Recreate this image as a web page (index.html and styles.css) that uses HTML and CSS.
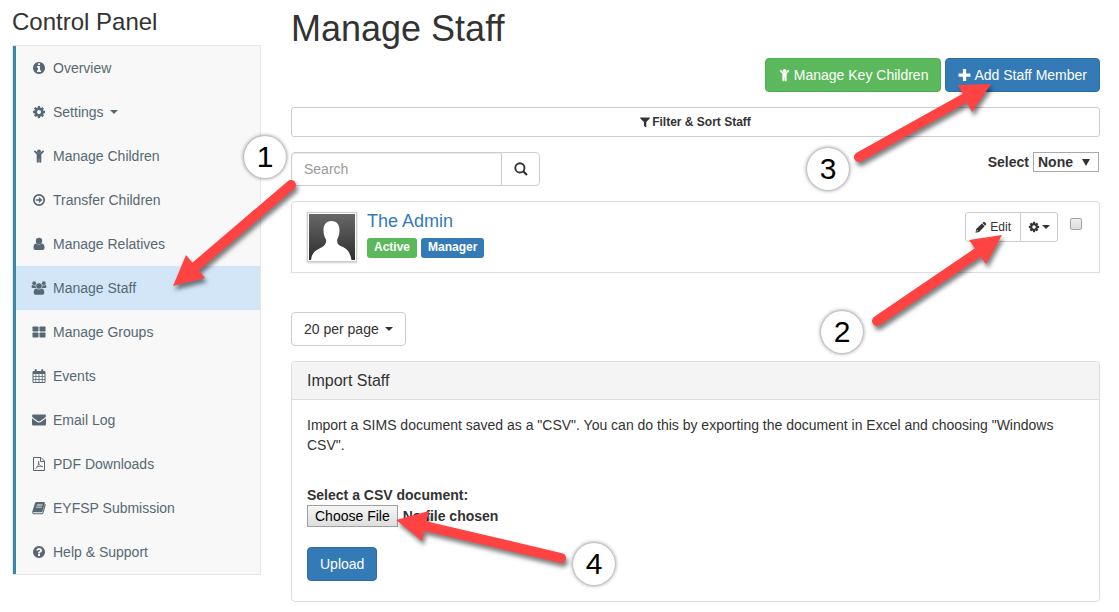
FILE: index.html
```html
<!DOCTYPE html>
<html lang="en">
<head>
    <meta charset="UTF-8">
    <meta name="viewport" content="width=device-width, initial-scale=1.0">
    <title>Manage Staff</title>
    <link rel="stylesheet" href="styles.css">
</head>
<body>

    <!-- icon sprite -->
    <svg class="sprite" aria-hidden="true">
        <symbol id="i-info" viewBox="0 0 1792 1792"><path d="M1152 1376v-160q0-14-9-23t-23-9h-96v-512q0-14-9-23t-23-9h-320q-14 0-23 9t-9 23v160q0 14 9 23t23 9h96v320h-96q-14 0-23 9t-9 23v160q0 14 9 23t23 9h448q14 0 23-9t9-23zm-128-896v-160q0-14-9-23t-23-9h-192q-14 0-23 9t-9 23v160q0 14 9 23t23 9h192q14 0 23-9t9-23zm640 416q0 209-103 385.5t-279.5 279.5-385.5 103-385.5-103-279.5-279.5-103-385.5 103-385.5 279.5-279.5 385.5-103 385.5 103 279.5 279.5 103 385.5z"/></symbol>
        <symbol id="i-cog" viewBox="0 0 1792 1792"><path d="M1152 896q0-106-75-181t-181-75-181 75-75 181 75 181 181 75 181-75 75-181zm512-109v222q0 12-8 23t-20 13l-185 28q-19 54-39 91 35 50 107 138 10 12 10 25t-9 23q-27 37-99 108t-94 71q-12 0-26-9l-138-108q-44 23-91 38-16 136-29 186-7 28-36 28h-222q-14 0-24.5-8.5t-11.5-21.5l-28-184q-49-16-90-37l-141 107q-10 9-25 9-14 0-25-11-126-114-165-168-7-10-7-23 0-12 8-23 15-21 51-66.5t54-70.5q-27-50-41-99l-183-27q-13-2-21-12.5t-8-23.5v-222q0-12 8-23t19-13l186-28q14-46 39-92-40-57-107-138-10-12-10-24 0-10 9-23 26-36 98.5-107.5t94.5-71.5q13 0 26 10l138 107q44-23 91-38 16-136 29-186 7-28 36-28h222q14 0 24.5 8.5t11.5 21.5l28 184q49 16 90 37l142-107q9-9 24-9 13 0 25 10 129 119 165 170 7 8 7 22 0 12-8 23-15 21-51 66.5t-54 70.5q26 50 41 98l183 28q13 2 21 12.5t8 23.5z"/></symbol>
        <symbol id="i-child" viewBox="0 0 14 14"><circle cx="7" cy="2.5" r="2"/><path d="M2.300 1.800a.9.9 0 0 1 1.300 0L6 4.200h2l2.400-2.400a.9.9 0 0 1 1.300 1.300L9.300 5.600V12.800a1 1 0 0 1-2.100 0V9.700h-.4v3.100a1 1 0 0 1-2.100 0V5.600L2.300 3.100a.9.9 0 0 1 0-1.300z"/></symbol>
        <symbol id="i-arrow" viewBox="0 0 14 14"><circle cx="7" cy="7" r="5.200" fill="none" stroke="currentColor" stroke-width="1.700"/><path d="M3.700 6.200h3.200V4L10.400 7 6.900 10V7.800H3.700z"/></symbol>
        <symbol id="i-user" viewBox="0 0 14 14"><circle cx="7" cy="4" r="3.200"/><path d="M1.500 10.800c0-2.600.7-4.400 2.700-4.400q2.800 2.200 5.600 0c2 0 2.700 1.800 2.700 4.400 0 1.400-.7 2.200-1.900 2.200H3.400c-1.200 0-1.900-.8-1.900-2.200z"/></symbol>
        <symbol id="i-users" viewBox="0 0 16 14"><circle cx="3.200" cy="2.200" r="1.900"/><circle cx="12.800" cy="2.200" r="1.900"/><path d="M.5 5.500Q.6 4 1.600 4q1.600 1 3 .3Q4.400 6 5.200 7H2Q.5 7 .5 5.500zM15.500 5.500Q15.400 4 14.400 4q-1.600 1-3 .3.200 1.700-.6 2.700H14q1.500 0 1.500-1.500z"/><circle cx="8" cy="5" r="2.800"/><path d="M2.700 11.800c0-2.500.8-4.400 2.500-4.400q2.800 2 5.600 0c1.700 0 2.500 1.900 2.500 4.400 0 1.200-.7 2-1.900 2H4.600c-1.200 0-1.900-.8-1.900-2z"/></symbol>
        <symbol id="i-groups" viewBox="0 0 14 14"><rect x=".5" y="1.500" width="6" height="5" rx=".7"/><rect x="7.500" y="1.500" width="6" height="5" rx=".7"/><rect x=".5" y="7.500" width="6" height="5" rx=".7"/><rect x="7.500" y="7.500" width="6" height="5" rx=".7"/></symbol>
        <symbol id="i-calendar" viewBox="0 0 14 14"><path fill-rule="evenodd" d="M1.500 2h1.200V1q0-1 1-1t1 1v1h4.600V1q0-1 1-1t1 1v1h1.200q1 0 1 1v10q0 1-1 1h-11q-1 0-1-1V3q0-1 1-1zM1.500 5v2h2V5zm2.700 0v2h2.400V5zm3.200 0v2h2.400V5zm3.200 0v2h1.900V5zM1.500 7.800v2.200h2V7.800zm2.700 0v2.200h2.400V7.800zm3.200 0v2.200h2.400V7.800zm3.200 0v2.200h1.900V7.800zM1.500 10.800V13h2v-2.200zm2.700 0V13h2.400v-2.200zm3.200 0V13h2.400v-2.200zm3.200 0V13h1.900v-2.200z"/></symbol>
        <symbol id="i-envelope" viewBox="0 0 14 14"><path d="M0 2.800q0-1.300 1.300-1.300h11.400q1.300 0 1.300 1.300 0 1.100-1.100 1.900L8.300 8q-1.300.9-2.600 0L1.100 4.700Q0 3.900 0 2.800zM0 5.200l5.100 3.700q1.900 1.300 3.800 0L14 5.200v6q0 1.300-1.300 1.300H1.300Q0 12.500 0 11.200z"/></symbol>
        <symbol id="i-pdf" viewBox="0 0 14 14"><path fill="none" stroke="currentColor" d="M1.500.5h7.500l3.500 3.500v9.500h-11zM8.500.5v4h4"/><path fill="none" stroke="currentColor" stroke-width=".8" d="M3.300 11.800q1.500-.6 2.700-3.300 1.100-2.600.6-4.200-.5 1.700.7 3.500 1.300 1.900 3.500 1.800-2.200-.8-6.100.3"/></symbol>
        <symbol id="i-book" viewBox="0 0 14 14"><path fill-rule="evenodd" d="M4.700 1h7.200q1.200 0 .9 1.200l-2.300 8q-.3 1-1.300 1H1.700q-.6 0-.5.500.2.500.9.500h7.400q.8 0 1-.8L12.900 2.800q1.100.3.800 1.200l-2.300 8.100q-.4 1.100-1.500 1.100H2.100Q.6 13.200.3 11.700q-.2-.7.1-1.400L2.900 2.200q.4-1.200 1.800-1.200zM5 3.600l-.3.900h5.600l.3-.9zm-.7 2.100-.3.900h5.600l.3-.9z"/></symbol>
        <symbol id="i-help" viewBox="0 0 1792 1792"><path d="M1024 1376v-192q0-14-9-23t-23-9h-192q-14 0-23 9t-9 23v192q0 14 9 23t23 9h192q14 0 23-9t9-23zm256-672q0-88-55.5-163t-138.5-116-170-41q-243 0-371 213-15 24 8 42l132 100q7 6 19 6 16 0 25-12 53-68 86-92 34-24 86-24 48 0 85.500 26t37.500 59q0 38-20 61t-68 45q-63 28-115.500 86.500t-52.500 125.500v36q0 14 9 23t23 9h192q14 0 23-9t9-23q0-19 21.500-49.500t54.500-49.500q32-18 49-28.500t46-35 44.500-48 28-60.500 12.500-81zm384 192q0 209-103 385.500t-279.500 279.500-385.500 103-385.500-103-279.500-279.500-103-385.500 103-385.500 279.500-279.500 385.500-103 385.500 103 279.500 279.500 103 385.500z"/></symbol>
        <symbol id="i-plus" viewBox="0 0 12 12"><path d="M4.500.5h3v4h4v3h-4v4h-3v-4h-4v-3h4z"/></symbol>
        <symbol id="i-filter" viewBox="0 0 10 12"><path d="M.5 1.500h9q.6.4.2 1L6.300 6v5q-.3.500-.8.200L3.900 9.700V6L.3 2.500q-.4-.6.200-1z"/></symbol>
        <symbol id="i-search" viewBox="0 0 14 14"><circle cx="5.900" cy="5.900" r="4.600" fill="none" stroke="currentColor" stroke-width="1.900"/><path d="M9.200 9.200l3.800 3.800" fill="none" stroke="currentColor" stroke-width="2.200"/></symbol>
        <symbol id="i-pencil" viewBox="0 0 12 12"><path fill-rule="evenodd" d="M8.300 1.200q.7-.7 1.500 0l1.200 1.200q.6.700 0 1.400l-.9.900-2.700-2.700zM6.900 2.500l2.700 2.700-5.500 5.700-3.600.8.700-3.700zM1.900 8.900l-.3 1.500 1.600-.3z"/></symbol>
    </svg>

    <div class="page">
        <aside class="sidebar">
            <h3>Control Panel</h3>
            <nav class="side-nav">
                <a href="#"><svg class="icon"><use href="#i-info"/></svg>Overview</a>
                <a href="#"><svg class="icon"><use href="#i-cog"/></svg>Settings <span class="caret"></span></a>
                <a href="#"><svg class="icon"><use href="#i-child"/></svg>Manage Children</a>
                <a href="#"><svg class="icon"><use href="#i-arrow"/></svg>Transfer Children</a>
                <a href="#"><svg class="icon"><use href="#i-user"/></svg>Manage Relatives</a>
                <a href="#" class="active"><svg class="icon icon-wide"><use href="#i-users"/></svg>Manage Staff</a>
                <a href="#"><svg class="icon"><use href="#i-groups"/></svg>Manage Groups</a>
                <a href="#"><svg class="icon"><use href="#i-calendar"/></svg>Events</a>
                <a href="#"><svg class="icon"><use href="#i-envelope"/></svg>Email Log</a>
                <a href="#"><svg class="icon"><use href="#i-pdf"/></svg>PDF Downloads</a>
                <a href="#"><svg class="icon"><use href="#i-book"/></svg>EYFSP Submission</a>
                <a href="#"><svg class="icon"><use href="#i-help"/></svg>Help &amp; Support</a>
            </nav>
        </aside>

        <main class="content">
            <h1>Manage Staff</h1>

            <div class="actions">
                <button type="button" class="btn btn-success"><svg class="icon-btn"><use href="#i-child"/></svg>Manage Key Children</button>
                <button type="button" class="btn btn-primary"><svg class="icon-btn"><use href="#i-plus"/></svg>Add Staff Member</button>
            </div>

            <button type="button" class="btn btn-filter"><svg class="icon-filter"><use href="#i-filter"/></svg>Filter &amp; Sort Staff</button>

            <div class="toolbar">
                <form class="search">
                    <input type="text" placeholder="Search" aria-label="Search">
                    <button type="button" class="btn" aria-label="Search"><svg class="icon-search"><use href="#i-search"/></svg></button>
                </form>
                <div class="select-all">
                    <label for="select-all">Select</label>
                    <span class="select-wrap">
                        <select id="select-all">
                            <option>None</option>
                            <option>All</option>
                        </select>
                    </span>
                </div>
            </div>

            <div class="staff">
                <svg class="avatar" viewBox="0 0 46 46" role="img" aria-label="The Admin">
                    <defs>
                        <linearGradient id="avatar-bg" x1="0" y1="0" x2="0" y2="1">
                            <stop offset="0" stop-color="#686868"/>
                            <stop offset="1" stop-color="#2e2e2e"/>
                        </linearGradient>
                    </defs>
                    <rect width="46" height="46" fill="url(#avatar-bg)"/>
                    <path fill="#fff" d="M22.500 7c5.500 0 8 4 8 9 0 4.500-1 7-2.300 9.500-.2 3 .3 5 3.300 6.500 7 2.500 9.500 6 11 14H2c1-7 3.500-9 8.500-11.500 4.500-2.500 7-4 6.500-9C15.500 23 14.500 20.500 14.500 16c0-5 2.500-9 8-9z"/>
                </svg>
                <div class="staff-info">
                    <a href="#" class="staff-name">The Admin</a>
                    <div class="labels">
                        <span class="label label-success">Active</span>
                        <span class="label label-primary">Manager</span>
                    </div>
                </div>
                <div class="staff-tools">
                    <div class="btn-group">
                        <button type="button" class="btn btn-sm"><svg class="icon-sm"><use href="#i-pencil"/></svg>Edit</button>
                        <button type="button" class="btn btn-sm btn-cog" aria-label="Options"><svg class="icon-cog"><use href="#i-cog"/></svg><span class="caret"></span></button>
                    </div>
                    <input type="checkbox" aria-label="Select The Admin">
                </div>
            </div>

            <button type="button" class="btn btn-paging">20 per page <span class="caret"></span></button>

            <section class="panel">
                <h2>Import Staff</h2>
                <form class="panel-body">
                    <p>Import a SIMS document saved as a "CSV". You can do this by exporting the document in Excel and choosing "Windows CSV".</p>
                    <label for="csv-file">Select a CSV document:</label>
                    <input type="file" id="csv-file">
                    <button type="button" class="btn btn-primary">Upload</button>
                </form>
            </section>
        </main>

        <!-- numbered steps over the page -->
        <svg class="arrows" aria-hidden="true">
            <g>
                <path class="shaft" d="M291 185L195 267"/>
                <path d="M173 286L186 255L205 278z"/>
            </g>
            <g>
                <path class="shaft" d="M877 321L977 253"/>
                <path d="M1002 235L969 240L986 264z"/>
            </g>
            <g>
                <path class="shaft" d="M859 157L965 98"/>
                <path d="M991 84L958 85L972 112z"/>
            </g>
            <g>
                <path class="shaft" d="M561 558L425 526"/>
                <path d="M396 520L429 511L422 541z"/>
            </g>
        </svg>
        <span class="step step-1">1</span>
        <span class="step step-2">2</span>
        <span class="step step-3">3</span>
        <span class="step step-4">4</span>
    </div>

</body>
</html>
```

FILE: styles.css
```css
* {
    box-sizing: border-box;
}
body {
    margin: 0;
    font-family: Arial, "Liberation Sans", sans-serif;
    font-size: 14px;
    line-height: 20px;
    color: #333;
    background-color: #fff;
}
h1, h2, h3, p {
    margin: 0;
    font-weight: normal;
}
a {
    color: #337ab7;
    text-decoration: none;
}
svg {
    fill: currentColor;
}
button, input, select {
    font-family: inherit;
}
.sprite {
    display: none;
}
.page {
    position: relative;
    display: grid;
    grid-template-columns: 249px 1fr;
    gap: 30px;
    align-items: start;
    padding: 8px 19px 10px 12px;
}

/* sidebar */
.sidebar h3 {
    font-size: 24px;
    line-height: 28px;
    margin-bottom: 9px;
}
.side-nav {
    border: 1px solid #e7e7e7;
    background-color: #f8f8f8;
    box-shadow: inset 3px 0 #3a87a8;
    padding-left: 3px;
}
.side-nav a {
    display: flex;
    align-items: center;
    height: 44px;
    padding: 0 16px;
    color: #566873;
}
.side-nav a.active {
    background-color: #d3e6f7;
}
.side-nav .caret {
    margin-left: 6px;
}
.icon {
    width: 14px;
    height: 14px;
    margin-right: 7px;
}
.icon-wide {
    width: 16px;
    margin: 0 6px 0 -1px;
}
.caret {
    display: inline-block;
    border-top: 4px solid;
    border-left: 4px solid transparent;
    border-right: 4px solid transparent;
    vertical-align: middle;
}

/* buttons */
.btn {
    display: inline-flex;
    align-items: center;
    justify-content: center;
    height: 34px;
    padding: 0 12px;
    font-size: 14px;
    line-height: 20px;
    color: #333;
    background-color: #fff;
    border: 1px solid #ccc;
    border-radius: 4px;
    cursor: pointer;
}
.btn-success {
    color: #fff;
    background-color: #5cb85c;
    border-color: #4cae4c;
}
.btn-primary {
    color: #fff;
    background-color: #337ab7;
    border-color: #2e6da4;
}
.icon-btn {
    width: 13px;
    height: 14px;
    margin-right: 3px;
}

/* content */
.content {
    min-width: 0;
}
h1 {
    font-size: 36px;
    line-height: 42px;
    margin-bottom: 8px;
}
.actions {
    display: flex;
    justify-content: flex-end;
    gap: 4px;
    margin-bottom: 15px;
}
.actions .btn {
    padding: 0 12px;
}
.btn-filter {
    width: 100%;
    height: 30px;
    font-size: 12px;
    font-weight: bold;
    border-radius: 3px;
}
.icon-filter {
    width: 10px;
    height: 12px;
    margin-right: 2px;
}
.toolbar {
    display: flex;
    justify-content: space-between;
    align-items: flex-start;
    margin: 15px 0;
}
.search {
    display: flex;
}
.search input {
    width: 211px;
    height: 34px;
    padding: 0 12px;
    font-size: 14px;
    border: 1px solid #ccc;
    border-radius: 4px 0 0 4px;
    box-shadow: inset 0 1px 1px rgba(0,0,0,0.08);
}
.search input::placeholder {
    color: #999;
}
.search .btn {
    width: 39px;
    padding: 0;
    margin-left: -1px;
    border-radius: 0 4px 4px 0;
}
.icon-search {
    width: 14px;
    height: 14px;
}
.select-all {
    display: flex;
    gap: 4px;
    padding-right: 1px;
    font-weight: bold;
}
.select-wrap {
    position: relative;
}
.select-wrap::after {
    content: "";
    position: absolute;
    right: 9px;
    top: 7px;
    border-top: 7px solid #333;
    border-left: 4px solid transparent;
    border-right: 4px solid transparent;
    pointer-events: none;
}
.select-wrap select {
    appearance: none;
    display: block;
    width: 66px;
    height: 20px;
    padding: 0 4px;
    font-size: 14px;
    font-weight: bold;
    color: #333;
    background-color: #fff;
    border: 1px solid #a9a9a9;
    border-radius: 0;
}

/* staff row */
.staff {
    display: flex;
    align-items: flex-start;
    min-height: 72px;
    padding: 10px 17px 10px 15px;
    border: 1px solid #ddd;
    border-radius: 4px 4px 0 0;
}
.avatar {
    width: 50px;
    height: 50px;
    padding: 1px;
    border: 1px solid #ccc;
    box-shadow: 0 1px 2px rgba(0,0,0,0.2);
}
.staff-info {
    flex: 1;
    padding-left: 10px;
}
.staff-name {
    display: block;
    font-size: 18px;
    line-height: 18px;
}
.labels {
    display: flex;
    gap: 4px;
    margin-top: 8px;
}
.label {
    padding: 0 7px;
    font-size: 12px;
    font-weight: bold;
    line-height: 19px;
    height: 20px;
    color: #fff;
    border-radius: 3px;
}
.label-success {
    background-color: #5cb85c;
}
.label-primary {
    background-color: #337ab7;
}
.staff-tools {
    display: flex;
    gap: 12px;
}
.btn-group {
    display: flex;
}
.btn-sm {
    height: 30px;
    padding: 0 9px;
    font-size: 12px;
    border-radius: 3px 0 0 3px;
}
.btn-cog {
    padding: 0 7px;
    margin-left: -1px;
    border-radius: 0 3px 3px 0;
}
.icon-sm {
    width: 12px;
    height: 12px;
    margin-right: 3px;
}
.icon-cog {
    width: 12px;
    height: 12px;
    margin-right: 2px;
}
.staff-tools input {
    appearance: none;
    width: 12px;
    height: 12px;
    margin: 6px 0 0;
    border: 1px solid #a5a5a5;
    border-radius: 2px;
    background-image: linear-gradient(#eee, #ddd);
}
.btn-paging {
    display: flex;
    gap: 6px;
    margin: 39px 0 15px;
}

/* import panel */
.panel {
    border: 1px solid #ddd;
    border-radius: 4px;
}
.panel h2 {
    padding: 9px 15px;
    font-size: 16px;
    line-height: 19px;
    background-color: #f4f4f4;
    border-bottom: 1px solid #ddd;
    border-radius: 3px 3px 0 0;
}
.panel-body {
    padding: 15px 15px 20px;
}
.panel-body p {
    margin-bottom: 30px;
}
.panel-body label {
    display: block;
    font-weight: bold;
}
.panel-body input {
    display: block;
    margin-bottom: 20px;
    font-size: 14px;
    font-weight: bold;
}
.panel-body input::file-selector-button {
    height: 22px;
    padding: 0 7px;
    margin-right: 5px;
    font-family: inherit;
    font-size: 14px;
    font-weight: normal;
    color: #000;
    background-image: linear-gradient(#f6f6f6, #dedede);
    border: 1px solid #a0a0a0;
    border-radius: 0;
}

/* numbered steps */
.arrows {
    position: absolute;
    left: 0;
    top: 0;
    width: 100%;
    height: 100%;
    color: #ff4342;
    pointer-events: none;
}
.arrows g {
    filter: drop-shadow(2px 4px 2px rgba(0,0,0,0.5));
}
.shaft {
    fill: none;
    stroke: currentColor;
    stroke-width: 10px;
    stroke-linecap: round;
}
.step {
    position: absolute;
    width: 42px;
    height: 42px;
    font-size: 30px;
    line-height: 42px;
    text-align: center;
    color: #000;
    background-color: #fff;
    border-radius: 50%;
    box-shadow: 0 0 4px rgba(0,0,0,0.6);
}
.step-1 {
    left: 244px;
    top: 136px;
}
.step-2 {
    left: 821px;
    top: 311px;
}
.step-3 {
    left: 807px;
    top: 148px;
}
.step-4 {
    left: 573px;
    top: 543px;
}
```
